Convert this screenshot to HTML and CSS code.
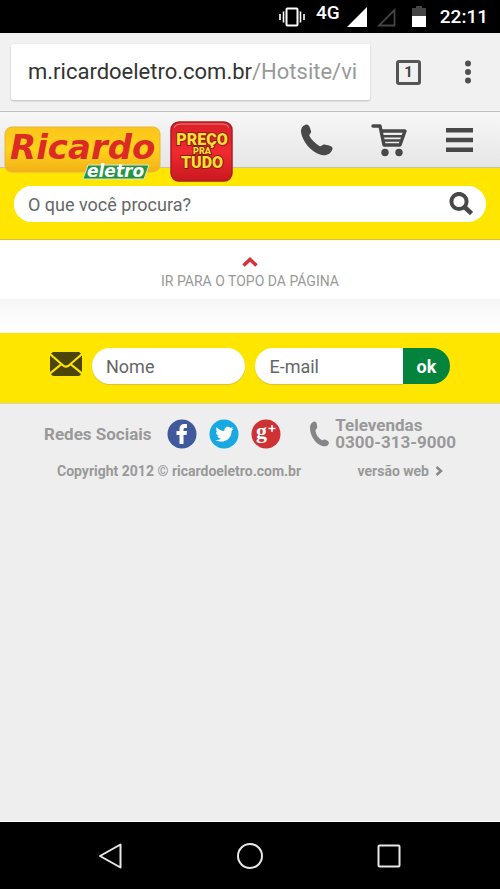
FILE: index.html
```html
<!DOCTYPE html>
<html lang="pt-BR">
<head>
<meta charset="utf-8">
<meta name="viewport" content="width=device-width, initial-scale=1">
<title>Ricardo Eletro</title>
<link rel="stylesheet" href="styles.css">
</head>
<body>
<div class="status-bar">
  <svg class="status-vibrate" width="26" height="20" viewBox="0 0 26 20" fill="none" stroke="#fff" stroke-width="2"><rect x="7.500" y="1.500" width="11" height="17" rx="1"/><path d="M1 7v6M4.500 4.500v11M21.500 4.500v11M25 7v6" stroke-width="1.600"/></svg>
  <span class="network">4G</span>
  <svg class="status-signal" width="20" height="20" viewBox="0 0 20 20"><path d="M20 0v20H0z" fill="#fff"/></svg>
  <svg class="status-signal-empty" width="20" height="20" viewBox="0 0 20 20"><path d="M18.500 3v15.500H3z" fill="none" stroke="#444" stroke-width="1.800"/></svg>
  <svg class="status-battery" width="14" height="21" viewBox="0 0 14 21"><path d="M0 2h4V0h6v2h4v8H0z" fill="#444"/><path d="M0 10h14v11H0z" fill="#fff"/></svg>
  <time class="clock">22:11</time>
</div>

<div class="browser-bar">
  <div class="address"><span>m.ricardoeletro.com.br</span><span class="address-path">/Hotsite/vi</span></div>
  <button class="tabs" type="button" aria-label="Abas">1</button>
  <button class="icon-button browser-menu" type="button" aria-label="Menu do navegador">
    <svg width="8" height="24" viewBox="0 0 8 24" fill="#505050"><circle cx="4" cy="3.500" r="3"/><circle cx="4" cy="12" r="3"/><circle cx="4" cy="20.500" r="3"/></svg>
  </button>
</div>

<header class="site-header">
  <a class="logo" href="#" aria-label="Ricardo Eletro">
    <svg width="230" height="64" viewBox="0 0 230 64">
      <defs>
        <linearGradient id="gold" x1="0" y1="0" x2="0" y2="1"><stop offset="0" stop-color="#fbc51b"/><stop offset=".5" stop-color="#ffd21a"/><stop offset="1" stop-color="#f3b018"/></linearGradient>
        <linearGradient id="red" x1="0" y1="0" x2="0" y2="1"><stop offset="0" stop-color="#d91f27"/><stop offset=".5" stop-color="#f02a2f"/><stop offset="1" stop-color="#c91820"/></linearGradient>
      </defs>
      <rect x="1" y="7" width="155" height="45" rx="7" fill="url(#gold)" stroke="#e8b53a"/>
      <text class="logo-name" x="6" y="39">Ricardo</text>
      <path d="M84 45h61l-5 14H79z" fill="#239447" stroke="#dce8c4" stroke-width="1"/>
      <text class="logo-sub" x="83" y="57">eletro</text>
      <rect x="167" y="2" width="61" height="59" rx="8" fill="url(#red)" stroke="#ab1d24" stroke-width="1.500"/>
      <path d="M170 8q1-4 6-4h43q5 0 6 4" fill="none" stroke="#f2807f"/>
      <g class="slogan"><text x="198" y="25">PREÇO</text><text class="slogan-small" x="198" y="34">PRA</text><text x="198" y="48">TUDO</text></g>
    </svg>
  </a>
  <nav class="header-nav">
    <a href="#" aria-label="Telefone"><svg width="32" height="32" viewBox="0 0 32 32" fill="#484848"><path d="M4 1C8-1 9 4 10 7c.8 2.500-2.500 3-1.500 5 2 4 6 7.500 10 10 2 1 2.500-2 5-1.500 3 .6 9 1.500 8 4.500-1.500 5-6 7-11 6C9 28 1 16 0 8c-.2-3 1-6 4-7z"/></svg></a>
    <a href="#" aria-label="Carrinho"><svg width="37" height="34" viewBox="0 0 37 34" fill="none" stroke="#484848" stroke-linecap="round" stroke-linejoin="round"><path d="M2 3h7l4 19h16l5-14H10.500" stroke-width="3.400"/><path d="M12 13.200h20M13 17.500h17" stroke-width="2.500"/><circle cx="14" cy="29.500" r="3.700" fill="#484848" stroke="none"/><circle cx="28" cy="29.500" r="3.700" fill="#484848" stroke="none"/></svg></a>
    <button class="icon-button" type="button" aria-label="Menu"><svg width="27" height="24" viewBox="0 0 27 24" fill="#484848"><path d="M0 0h27v4.500H0zM0 9.800h27v4.400H0zM0 19.500h27V24H0z"/></svg></button>
  </nav>
</header>

<form class="search">
  <div class="search-box">
    <input class="field" type="search" placeholder="O que você procura?" aria-label="O que você procura?">
    <button class="icon-button" type="button" aria-label="Buscar"><svg width="24" height="24" viewBox="0 0 24 24" fill="none" stroke="#484848"><circle cx="10" cy="9.500" r="7.600" stroke-width="4"/><path d="M15.500 15l7 6.500" stroke-width="4.500"/></svg></button>
  </div>
</form>

<a class="to-top" href="#">
  <svg width="16" height="10" viewBox="0 0 16 10" fill="none" stroke="#d9303c" stroke-width="3.500"><path d="M1.500 8.500L8 2.500l6.500 6"/></svg>
  <span>IR PARA O TOPO DA PÁGINA</span>
</a>
<div class="fade"></div>

<form class="newsletter">
  <svg class="mail" width="32" height="24" viewBox="0 0 32 24" fill="#4b4508"><path d="M3 0h26l2 1.500L18.500 12.500q-2.500 2-5 0L1 1.500z"/><path d="M0 3.500L10 12 0 20zM32 3.500L22 12l10 8z"/><path d="M11.500 13.500l2 1.500q2.500 1.500 5 0l2-1.500L31 22q-.5 2-3 2H4q-2.500 0-3-2z"/></svg>
  <input class="field pill" type="text" placeholder="Nome" aria-label="Nome">
  <div class="email-box">
    <input class="field pill email" type="email" placeholder="E-mail" aria-label="E-mail">
    <button class="ok" type="button">ok</button>
  </div>
</form>

<footer class="footer">
  <div class="contact">
    <strong>Redes Sociais</strong>
    <div class="social">
      <a href="#" aria-label="Facebook"><svg width="30" height="30" viewBox="0 0 30 30"><circle cx="15" cy="15" r="14.500" fill="#40589c"/><path d="M12.500 25V16H9.500v-4h3V10c0-3.500 2-5 5-5H20v4h-2c-1 0-1.500.5-1.500 1.500V12H20l-.5 4h-3v9z" fill="#fff"/></svg></a>
      <a href="#" aria-label="Twitter"><svg width="30" height="30" viewBox="0 0 30 30"><circle cx="15" cy="15" r="14.500" fill="#18a9e2"/><path d="M24.500 9.500l-2 .6 1.500-2-2.300.8c-3-2.800-7-.5-6.300 3.100-3 0-5.700-1.400-7.700-3.800-1 2-.5 4 1 5.200l-1.700-.4c0 2 1.200 3.300 3 3.900H8.300c.5 1.500 1.700 2.500 3.500 2.600-1.500 1.200-3 1.600-5.200 1.500 7 4 16 .2 16-9z" fill="#fff"/></svg></a>
      <a href="#" aria-label="Google Plus"><svg width="30" height="30" viewBox="0 0 30 30"><circle cx="15" cy="15" r="14.500" fill="#cf3235"/><text class="google-g" x="5" y="19">g</text><path d="M21 6v7M17.500 9.500h7" stroke="#fff" stroke-width="1.500"/></svg></a>
    </div>
    <a class="phone" href="#">
      <svg width="19" height="26" viewBox="0 0 19 26" fill="#858585"><path d="M3 1c3-1.800 4 1 4.200 5 .2 2.300-2 2-1.700 4 .5 4 3 7 6 9 1.500 1 2-.8 4-.3 2 .6 4 2 3.200 4-1 2.500-4 3.300-7 2C4 22 0 13 0 7c0-3 1-5 3-6z"/></svg>
      <strong>Televendas<br>0300-313-9000</strong>
    </a>
  </div>
  <div class="legal">
    <span>Copyright 2012 © ricardoeletro.com.br</span>
    <a href="#">versão web <svg width="8" height="10" viewBox="0 0 8 10" fill="none" stroke="#888" stroke-width="2.500"><path d="M1.500 1L6 5l-4.500 4"/></svg></a>
  </div>
</footer>

<nav class="system-nav">
  <button class="icon-button" type="button" aria-label="Voltar"><svg width="26" height="26" viewBox="0 0 26 26"><path d="M22.500 1.500v23L2 13z"/></svg></button>
  <button class="icon-button" type="button" aria-label="Início"><svg width="26" height="26" viewBox="0 0 26 26"><circle cx="13" cy="13" r="12"/></svg></button>
  <button class="icon-button" type="button" aria-label="Recentes"><svg width="26" height="26" viewBox="0 0 26 26"><rect x="2.500" y="2.500" width="21" height="21" rx="1"/></svg></button>
</nav>
</body>
</html>
```

FILE: styles.css
```css
* { box-sizing: border-box; }

body {
  margin: 0;
  min-height: 100vh;
  display: flex;
  flex-direction: column;
  background: #eee;
  font-family: Roboto, "Liberation Sans", sans-serif;
  color: #999;
}

a { color: inherit; text-decoration: none; }
svg { display: block; flex: none; }
button, input { font: inherit; border: 0; padding: 0; margin: 0; }
.icon-button { display: flex; background: none; }

.status-bar {
  height: 33px;
  padding: 0 12px;
  display: flex;
  justify-content: flex-end;
  align-items: center;
  background: #000;
  color: #fff;
}
.network { margin: 0 7px 8px 11px; font-size: 19px; line-height: 20px; font-weight: 500; }
.status-signal-empty { margin: 0 16px 0 9px; }
.clock { margin-left: 14px; font-size: 19px; font-weight: 500; }

.browser-bar {
  height: 79px;
  padding: 0 28px 0 11px;
  display: flex;
  align-items: center;
  background: #f1f1f1;
  border-bottom: 1px solid #bfbfbf;
}
.address {
  flex: 1;
  min-width: 0;
  height: 56px;
  padding-left: 17px;
  overflow: hidden;
  white-space: nowrap;
  background: #fff;
  border-radius: 2px;
  box-shadow: 0 1px 2px #bbb;
  color: #333;
  font-size: 22px;
  line-height: 56px;
}
.address-path { color: #999; }
.tabs {
  width: 25px;
  height: 25px;
  margin: 0 43px 0 26px;
  background: none;
  border: 3px solid #555;
  border-radius: 3px;
  color: #444;
  font-size: 15px;
  line-height: 19px;
  font-weight: 700;
}

.site-header {
  height: 56px;
  padding: 0 27px 0 4px;
  display: flex;
  justify-content: space-between;
  align-items: flex-start;
  background: linear-gradient(#f7f7f7, #e6e6e6);
  border-bottom: 1px solid #c9c39a;
}
.logo { margin-top: 8px; position: relative; }
.logo-name { font: italic 700 34px "DejaVu Sans", sans-serif; fill: #dc2b25; }
.logo-sub { font: italic 700 17px "DejaVu Sans", sans-serif; fill: #fff; }
.slogan {
  font: 900 16px Roboto, sans-serif;
  fill: #ffdf35;
  stroke: #8f1c12;
  stroke-width: 2px;
  paint-order: stroke;
  text-anchor: middle;
}
.slogan-small { font-size: 9px; }
.header-nav { height: 55px; display: flex; align-items: center; gap: 38px; }

.search {
  height: 72px;
  padding: 18px 14px;
  background: #ffe600;
  border-bottom: 1px solid #d5c23c;
}
.search-box {
  height: 36px;
  padding-right: 13px;
  display: flex;
  align-items: center;
  background: #fff;
  border-radius: 18px;
}
.field {
  min-width: 0;
  width: 100%;
  height: 36px;
  padding: 0 14px;
  background: #fff;
  outline: 0;
  border-radius: 18px;
  color: #666;
  font-size: 18px;
}
.field::placeholder { color: #666; opacity: 1; }

.to-top {
  height: 59px;
  padding-top: 17px;
  display: flex;
  flex-direction: column;
  align-items: center;
  gap: 6px;
  background: #fff;
  font-size: 14px;
  line-height: 16px;
}
.fade { height: 34px; background: linear-gradient(#f6f6f6, #fff); }

.newsletter {
  height: 70px;
  padding: 0 50px 4px;
  display: grid;
  grid-template-columns: auto 153fr 194fr;
  align-items: center;
  column-gap: 10px;
  background: #ffe600;
}
.mail { margin-bottom: 4px; }
.pill { box-shadow: 0 1px 1px #d5c23c; }
.email-box { min-width: 0; display: flex; }
.email { flex: 1; border-radius: 18px 0 0 18px; }
.ok {
  width: 47px;
  background: #04833d;
  border-radius: 0 18px 18px 0;
  color: #fff;
  font-size: 18px;
  font-weight: 700;
}

.footer {
  flex: 1;
  padding: 13px 44px;
  border-top: 1px solid #d6d3b8;
  border-bottom: 1px solid #fff;
}
.contact {
  display: flex;
  justify-content: space-between;
  align-items: center;
  font-size: 17px;
  line-height: 17px;
}
.social { display: flex; gap: 12px; }
.google-g { font: 700 22px "Liberation Serif", serif; fill: #fff; }
.phone { display: flex; align-items: center; gap: 6px; padding-left: 14px; }
.legal {
  margin-top: 12px;
  padding: 0 13px;
  display: flex;
  justify-content: space-between;
  font-size: 14px;
  line-height: 16px;
  font-weight: 700;
}
.legal a { display: flex; align-items: center; gap: 6px; }

.system-nav {
  height: 67px;
  display: flex;
  justify-content: center;
  align-items: center;
  gap: 113px;
  background: #000;
}
.system-nav svg { fill: none; stroke: #e8e8e8; stroke-width: 2px; stroke-linejoin: round; }
```
